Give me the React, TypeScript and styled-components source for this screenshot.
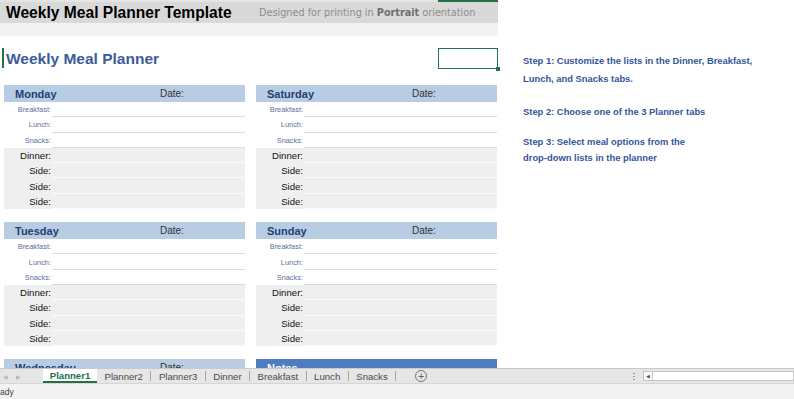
import React from "react";
import styled, { createGlobalStyle } from "styled-components";

const Global = createGlobalStyle`
  html, body { margin: 0; padding: 0; background: #fff; }
  body { font-family: "Liberation Sans", Arial, sans-serif; overflow: hidden; }
  * { box-sizing: border-box; }
`;

const Page = styled.div`
  width: 794px;
  height: 399px;
  display: flex;
  flex-direction: column;
  overflow: hidden;
`;

const Sheet = styled.div`
  height: 368px;
  flex: none;
  display: flex;
  overflow: hidden;
  background: #fff;
`;

const LeftCol = styled.div`
  width: 498px;
  flex: none;
  display: flex;
  flex-direction: column;
  & > * { flex-shrink: 0; }
`;

const TopStrip = styled.div`
  height: 2px;
  background: linear-gradient(to right, #e4e4e4 0 438px, #217346 438px 498px);
`;

const TitleBand = styled.div`
  height: 21px;
  background: #d9d9d9;
  display: flex;
  align-items: center;
  padding-left: 6px;
`;

const Title = styled.div`
  font-weight: bold;
  font-size: 15.6px;
  color: #000;
  width: 253px;
  flex: none;
`;

const Designed = styled.div`
  font-family: "DejaVu Sans", Verdana, sans-serif;
  font-size: 9.7px;
  color: #8c8c8c;
  b { color: #6f6f6f; }
`;

const SubBand = styled.div`
  height: 13px;
  background: #f2f2f2;
`;

const HeadingArea = styled.div`
  height: 49px;
  display: flex;
  align-items: flex-start;
  padding-top: 12px;
  padding-left: 2px;
`;

const Marker = styled.div`
  width: 1.5px;
  height: 20px;
  background: #217346;
  flex: none;
`;

const Heading = styled.div`
  font-weight: bold;
  font-size: 15.5px;
  color: #3b5c9c;
  margin-left: 2.5px;
  margin-top: 2px;
  flex: 1;
`;

const SelectedCell = styled.div`
  width: 60px;
  height: 21px;
  border: 1.5px solid #217346;
  position: relative;
  flex: none;
  &::after {
    content: "";
    position: absolute;
    right: -3px;
    bottom: -3px;
    width: 4px;
    height: 4px;
    background: #217346;
  }
`;

const DayGrid = styled.div`
  display: grid;
  grid-template-columns: 241px 241px;
  column-gap: 11px;
  row-gap: 13px;
  padding-left: 4px;
`;

const Block = styled.div`
  display: flex;
  flex-direction: column;
`;

const BlockHeader = styled.div<{ $notes?: boolean }>`
  height: 17px;
  flex: none;
  display: grid;
  grid-template-columns: 145px 1fr;
  align-items: center;
  padding-left: 11px;
  background: ${(p) => (p.$notes ? "#4f7bbf" : "#b8cce4")};
`;

const DayName = styled.span<{ $notes?: boolean }>`
  font-weight: bold;
  font-size: 11px;
  color: ${(p) => (p.$notes ? "#fff" : "#233f72")};
`;

const DateLabel = styled.span`
  font-size: 10px;
  color: #333;
`;

const Row = styled.div<{ $shade?: boolean }>`
  height: 15.3px;
  display: flex;
  background: ${(p) => (p.$shade ? "#efefef" : "#fff")};
`;

const Label = styled.div<{ $big?: boolean }>`
  width: 48px;
  flex: none;
  text-align: right;
  padding-right: 1px;
  display: flex;
  align-items: center;
  justify-content: flex-end;
  font-size: ${(p) => (p.$big ? "9.6px" : "7.4px")};
  color: ${(p) => (p.$big ? "#111" : "#5a6e9e")};
`;

const Value = styled.div<{ $shade?: boolean }>`
  flex: 1;
  border-bottom: 1px solid ${(p) => (p.$shade ? "#fbfbfb" : "#dcdcdc")};
`;

const RightCol = styled.div`
  flex: 1;
  padding-left: 25px;
  padding-top: 52px;
  color: #34559a;
  font-weight: bold;
  font-size: 9.4px;
`;

const Step = styled.p<{ $lh: number; $mt: number }>`
  margin: ${(p) => p.$mt}px 0 0 0;
  line-height: ${(p) => p.$lh}px;
`;

const TabBar = styled.div`
  height: 16px;
  flex: none;
  background: #e6e6e6;
  border-top: 1px solid #c9c9c9;
  border-bottom: 1px solid #d6d6d6;
  display: flex;
  align-items: stretch;
  font-size: 9.6px;
  color: #4a4a4a;
`;

const NavArrows = styled.div`
  width: 43px;
  flex: none;
  display: flex;
  align-items: center;
  gap: 8px;
  padding-left: 3px;
  color: #b8b8b8;
  font-size: 6px;
`;

const Tab = styled.div<{ $active?: boolean }>`
  padding: 0 7.5px;
  display: flex;
  align-items: center;
  background: ${(p) => (p.$active ? "#fff" : "transparent")};
  color: ${(p) => (p.$active ? "#217346" : "#4a4a4a")};
  font-weight: ${(p) => (p.$active ? "bold" : "normal")};
  border-bottom: ${(p) => (p.$active ? "2px solid #217346" : "none")};
  width: ${(p) => (p.$active ? "54px" : "auto")};
  justify-content: center;
`;

const Sep = styled.div`
  width: 1px;
  height: 10px;
  background: #a8a8a8;
  align-self: center;
`;

const AddBtn = styled.div`
  margin-left: 19px;
  width: 12px;
  height: 12px;
  border-radius: 50%;
  border: 1px solid #777;
  align-self: center;
  display: flex;
  align-items: center;
  justify-content: center;
  font-size: 11px;
  line-height: 1;
  color: #666;
`;

const Spacer = styled.div`
  flex: 1;
`;

const Dots = styled.div`
  width: 2px;
  align-self: center;
  height: 9px;
  background: radial-gradient(circle, #9a9a9a 0.8px, transparent 1px) 0 0 / 2px 3px;
  margin-right: 8px;
`;

const HScroll = styled.div`
  width: 151px;
  align-self: center;
  height: 10px;
  background: #fff;
  border: 1px solid #c6c6c6;
  display: flex;
  align-items: center;
`;

const ScrollArrow = styled.div`
  width: 9px;
  height: 100%;
  border-right: 1px solid #c6c6c6;
  display: flex;
  align-items: center;
  justify-content: center;
  font-size: 5px;
  color: #555;
`;

const StatusBar = styled.div`
  flex: 1;
  background: #f3f3f3;
  display: flex;
  align-items: center;
  overflow: hidden;
  font-size: 8.6px;
  color: #444;
`;

const mealRows: { label: string; big?: boolean }[] = [
  { label: "Breakfast:" },
  { label: "Lunch:" },
  { label: "Snacks:" },
  { label: "Dinner:", big: true },
  { label: "Side:", big: true },
  { label: "Side:", big: true },
  { label: "Side:", big: true },
];

const DayBlock: React.FC<{ day: string; rows?: boolean }> = ({ day, rows = true }) => (
  <Block>
    <BlockHeader>
      <DayName>{day}</DayName>
      <DateLabel>Date:</DateLabel>
    </BlockHeader>
    {rows &&
      mealRows.map((r, i) => (
        <Row key={i} $shade={r.big}>
          <Label $big={r.big}>{r.label}</Label>
          <Value $shade={r.big} />
        </Row>
      ))}
  </Block>
);

const tabs = ["Planner2", "Planner3", "Dinner", "Breakfast", "Lunch", "Snacks"];

export default function App() {
  return (
    <Page>
      <Global />
      <Sheet>
        <LeftCol>
          <TopStrip />
          <TitleBand>
            <Title>Weekly Meal Planner Template</Title>
            <Designed>
              Designed for printing in <b>Portrait</b> orientation
            </Designed>
          </TitleBand>
          <SubBand />
          <HeadingArea>
            <Marker />
            <Heading>Weekly Meal Planner</Heading>
            <SelectedCell />
          </HeadingArea>
          <DayGrid>
            <DayBlock day="Monday" />
            <DayBlock day="Saturday" />
            <DayBlock day="Tuesday" />
            <DayBlock day="Sunday" />
            <DayBlock day="Wednesday" rows={false} />
            <Block>
              <BlockHeader $notes>
                <DayName $notes>Notes</DayName>
              </BlockHeader>
            </Block>
          </DayGrid>
        </LeftCol>
        <RightCol>
          <Step $lh={18} $mt={0}>
            Step 1: Customize the lists in the Dinner, Breakfast,
            <br />
            Lunch, and Snacks tabs.
          </Step>
          <Step $lh={16} $mt={16}>
            Step 2: Choose one of the 3 Planner tabs
          </Step>
          <Step $lh={16} $mt={14}>
            Step 3: Select meal options from the
            <br />
            drop-down lists in the planner
          </Step>
        </RightCol>
      </Sheet>
      <TabBar>
        <NavArrows>
          <span>◀</span>
          <span>▶</span>
        </NavArrows>
        <Tab $active>Planner1</Tab>
        {tabs.map((t) => (
          <React.Fragment key={t}>
            <Tab>{t}</Tab>
            <Sep />
          </React.Fragment>
        ))}
        <AddBtn>+</AddBtn>
        <Spacer />
        <Dots />
        <HScroll>
          <ScrollArrow>◀</ScrollArrow>
        </HScroll>
      </TabBar>
      <StatusBar>
        <span>ady</span>
      </StatusBar>
    </Page>
  );
}
